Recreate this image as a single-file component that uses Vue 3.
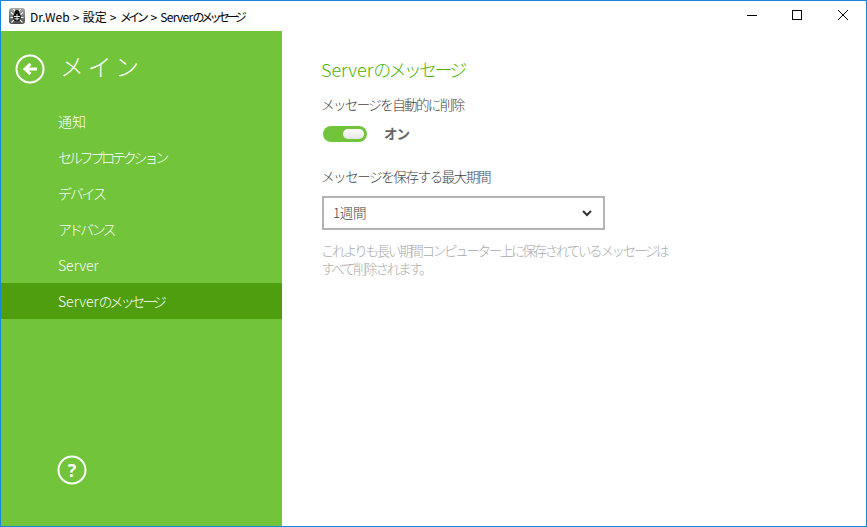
<script setup>
const items = [
  { latin: '', kana: '通知', ls: '0' },
  { latin: '', kana: 'セルフプロテクション', ls: '-3.2px' },
  { latin: '', kana: 'デバイス', ls: '-2.2px' },
  { latin: '', kana: 'アドバンス', ls: '-3px' },
  { latin: 'Server', kana: '', ls: '0' },
  { latin: 'Server', kana: 'のメッセージ', ls: '-3.1px', active: true },
]
</script>

<template>
  <div class="window">
    <header class="titlebar">
      <svg class="logo" width="16" height="16" viewBox="0 0 16 16">
        <defs>
          <linearGradient id="lg" x1="0" y1="0" x2="0" y2="1">
            <stop offset="0" stop-color="#a8a8a8" />
            <stop offset="1" stop-color="#4a4a4a" />
          </linearGradient>
        </defs>
        <rect width="16" height="16" rx="3" fill="url(#lg)" />
        <path d="M5 7 2 4.5M11 7l3-2.5M4.5 9.5H1.5M11.5 9.5h3M5 12l-2.5 2.5M11 12l2.5 2.5M6 3 4.5 1M10 3l1.5-2" stroke="#fff" stroke-width="1.2" fill="none" />
        <ellipse cx="8" cy="9" rx="3.8" ry="4.4" fill="#111" />
        <circle cx="8" cy="4.2" r="2.2" fill="#111" />
        <path d="M8 6v6.5M5 8.5h6M5.5 10.8h5" stroke="#e8e8e8" stroke-width="1" />
      </svg>
      <span class="title">Dr.Web &gt; 設定 &gt; <span class="kana first">メイン</span> &gt; <span class="latin">Server</span><span class="kana">のメッセージ</span></span>
      <div class="controls">
        <svg width="10" height="10" viewBox="0 0 10 10"><path d="M0 5.5h10" stroke="#000" stroke-width="1" /></svg>
        <svg width="10" height="10" viewBox="0 0 10 10"><rect x=".5" y=".5" width="9" height="9" fill="none" stroke="#000" /></svg>
        <svg class="close" width="10" height="10" viewBox="0 0 10 10"><path d="M0 0l10 10M10 0 0 10" stroke="#000" stroke-width="1" fill="none" /></svg>
      </div>
    </header>
    <div class="body">
      <aside class="sidebar">
        <div class="side-head">
          <svg class="back" width="30" height="30" viewBox="0 0 30 30">
            <circle cx="15" cy="15" r="13.5" fill="none" stroke="#fff" stroke-width="2" />
            <path d="M22 15H11M15.5 9.8 10 15l5.5 5.2" fill="none" stroke="#fff" stroke-width="3" />
          </svg>
          <span class="side-title">メイン</span>
        </div>
        <nav class="nav">
          <a v-for="item in items" :key="item.latin + item.kana" class="nav-item" :class="{ active: item.active }">{{ item.latin }}<span :style="{ letterSpacing: item.ls }">{{ item.kana }}</span></a>
        </nav>
        <div class="help">
          <svg width="30" height="30" viewBox="0 0 30 30">
            <circle cx="15" cy="15" r="13.5" fill="none" stroke="#fff" stroke-width="2" />
          </svg>
          <span class="help-mark">?</span>
        </div>
      </aside>
      <main class="content">
        <h1 class="heading">Server<span class="kana-h">のメッセージ</span></h1>
        <div class="label l1">メッセージを自動的に削除</div>
        <div class="toggle-row">
          <span class="toggle"><span class="knob"></span></span>
          <span class="on">オン</span>
        </div>
        <div class="label l2">メッセージを保存する最大期間</div>
        <div class="select">
          <span class="select-text">1週間</span>
          <svg width="10" height="7" viewBox="0 0 10 7"><path d="M1 1l4 4 4-4" fill="none" stroke="#333" stroke-width="2" /></svg>
        </div>
        <p class="hint">これよりも長い期間コンピューター上に保存されているメッセージは<br />すべて削除されます。</p>
      </main>
    </div>
  </div>
</template>

<style>
html, body { margin: 0; padding: 0; background: #fff; }
</style>

<style scoped>
.window {
  width: 867px;
  height: 527px;
  box-sizing: border-box;
  border: 1px solid #1a86d9;
  display: flex;
  flex-direction: column;
  overflow: hidden;
  font-family: "Noto Sans CJK JP", "Noto Sans", sans-serif;
  background: #fff;
}
.titlebar {
  height: 30px;
  flex: none;
  display: flex;
  align-items: center;
  padding-left: 8px;
}
.logo { margin-right: 5px; }
.title { font-size: 12px; color: #000; word-spacing: 0.5px; white-space: nowrap; }
.kana { letter-spacing: -3.5px; }
.kana.first { margin-right: 2px; }
.latin { letter-spacing: -0.7px; }
.controls {
  margin-left: auto;
  margin-bottom: 2px;
  display: flex;
  align-items: center;
  gap: 35px;
  padding-right: 18px;
}
.controls .close { margin-left: 1px; }
.body { flex: 1; display: flex; min-height: 0; }
.sidebar {
  width: 281px;
  flex: none;
  background: #72c43a;
  display: flex;
  flex-direction: column;
  color: #fff;
}
.side-head {
  height: 72px;
  display: flex;
  align-items: center;
  padding-left: 14px;
  gap: 15px;
  flex: none;
}
.back { margin-top: 4px; }
.side-title { font-size: 24px; font-weight: 300; letter-spacing: 3.5px; margin-top: -4px; }
.nav { display: flex; flex-direction: column; }
.nav-item {
  height: 36px;
  line-height: 36px;
  padding-left: 57px;
  font-size: 14px;
  font-weight: 300;
  color: #fff;
  white-space: nowrap;
}
.nav-item.active { background: #4f9e0d; }
.help {
  position: relative;
  margin-top: auto;
  margin-left: 56px;
  margin-bottom: 41px;
  width: 30px;
  height: 30px;
}
.help svg { display: block; }
.help-mark {
  position: absolute;
  inset: 0;
  text-align: center;
  line-height: 30px;
  font-size: 18px;
  font-weight: 700;
  font-family: "Open Sans", sans-serif;
}
.content { flex: 1; padding-left: 40px; color: #555; }
.heading {
  margin: 25px 0 0 -1px;
  font-size: 18px;
  line-height: 26px;
  font-weight: 300;
  color: #4fb300;
  white-space: nowrap;
}
.kana-h { letter-spacing: -2.7px; }
.label {
  margin-left: -1px;
  font-size: 13.5px;
  line-height: 20px;
  font-weight: 300;
  color: #444;
  letter-spacing: -1.6px;
  white-space: nowrap;
}
.l1 { margin-top: 12px; }
.l2 { margin-top: 24px; letter-spacing: -1.4px; }
.toggle-row { display: flex; align-items: center; margin-top: 12px; height: 16px; }
.toggle {
  width: 44px;
  height: 16px;
  margin-left: 1px;
  border-radius: 8px;
  background: #72c43a;
  display: flex;
  align-items: center;
  justify-content: flex-end;
  padding-right: 3px;
  box-sizing: border-box;
}
.knob {
  width: 21px;
  height: 10px;
  border-radius: 5px;
  background: linear-gradient(#fff, #e4e4e4);
}
.on { margin-left: 17px; margin-top: -2px; font-size: 13.5px; font-weight: 700; color: #666; letter-spacing: -1px; }
.select {
  margin-top: 10px;
  width: 283px;
  height: 34px;
  box-sizing: border-box;
  border: 2px solid #b4b4b4;
  display: flex;
  align-items: center;
  justify-content: space-between;
  padding: 0 11px 0 9px;
}
.select-text { font-size: 13.5px; font-weight: 300; color: #444; letter-spacing: -0.4px; margin-top: -2px; }
.hint {
  margin: 11px 0 0 -1px;
  font-size: 13.5px;
  line-height: 18px;
  font-weight: 300;
  color: #aaa;
  letter-spacing: -2.3px;
  white-space: nowrap;
}
</style>
